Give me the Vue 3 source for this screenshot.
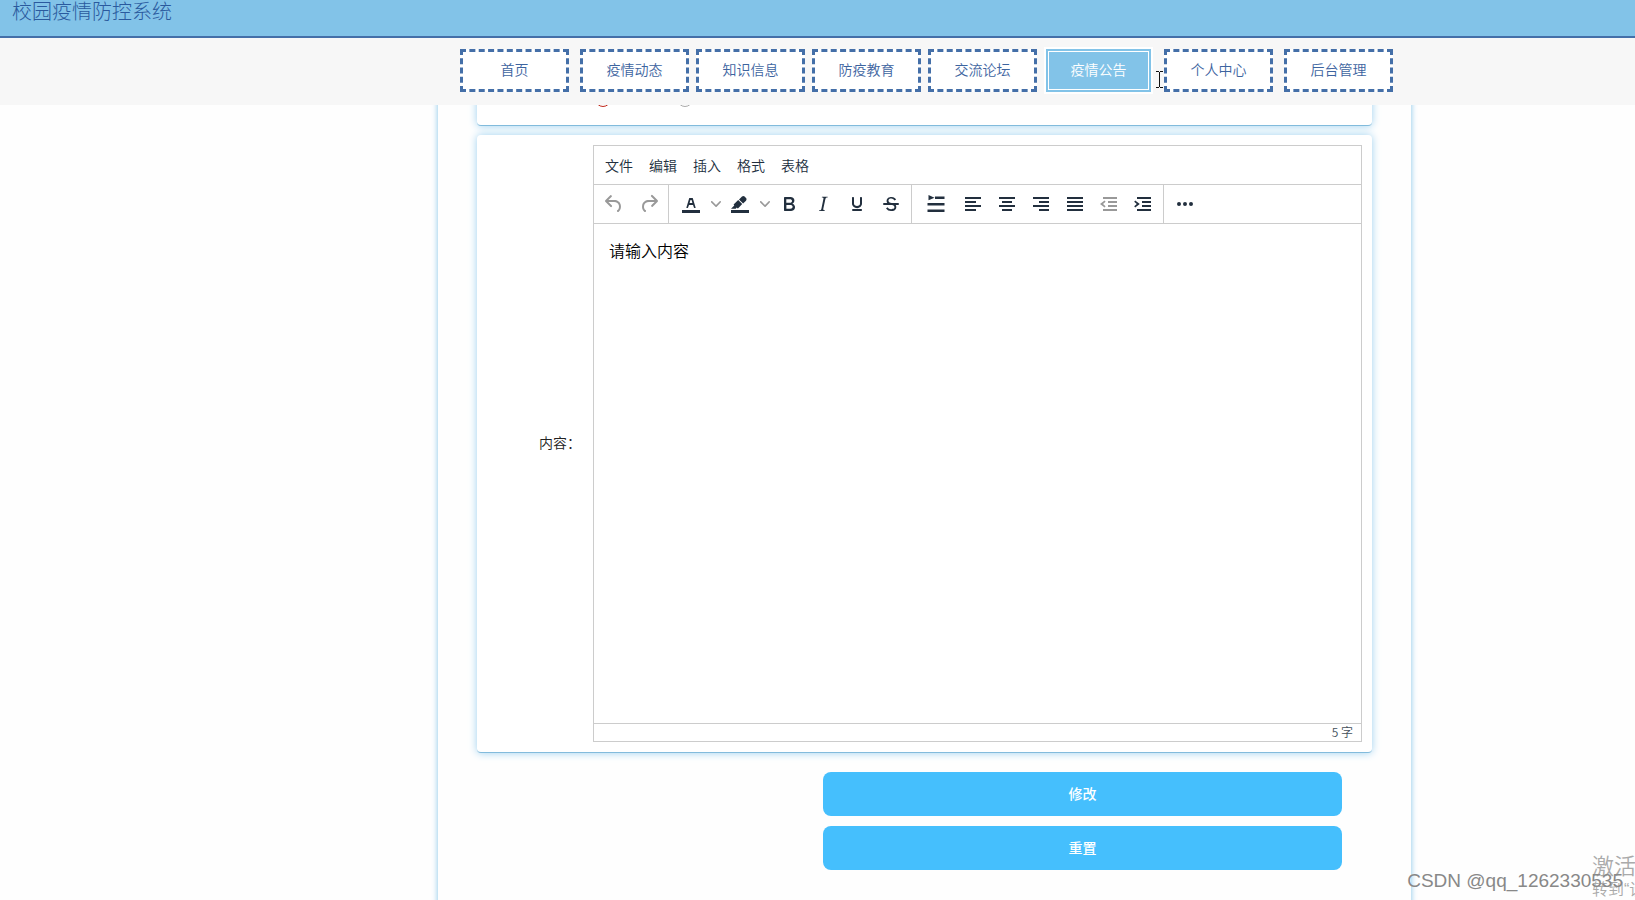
<script setup>
import { ref } from 'vue'

const navGroups = [
  ['首页'],
  ['疫情动态', '知识信息', '防疫教育', '交流论坛', '疫情公告'],
  ['个人中心'],
  ['后台管理']
]
const current = '疫情公告'
const menus = ['文件', '编辑', '插入', '格式', '表格']
const state = ref('a')
const content = ref('请输入内容')

const toolGroups = [
  {
    name: 'history',
    tools: [
      { label: '撤销', muted: true, paths: ['M6.4 8H12c3.7 0 6.2 2 6.8 5.1.6 2.7-.4 5.6-2.3 6.8a1 1 0 01-1-1.8c1.1-.6 1.8-2.7 1.4-4.6-.5-2.1-2.1-3.5-4.9-3.5H6.4l3.3 3.3a1 1 0 11-1.4 1.4l-5-5a1 1 0 010-1.4l5-5a1 1 0 011.4 1.4L6.4 8z'] },
      { label: '重做', muted: true, paths: ['M17.6 10H12c-2.8 0-4.4 1.4-4.9 3.5-.4 2 .3 4 1.4 4.6a1 1 0 11-1 1.8c-2-1.2-2.9-4.1-2.3-6.8.6-3 3-5.1 6.8-5.1h5.6l-3.3-3.3a1 1 0 111.4-1.4l5 5a1 1 0 010 1.4l-5 5a1 1 0 01-1.4-1.4l3.3-3.3z'] }
    ]
  },
  {
    name: 'format',
    tools: [
      { label: '文字颜色', split: true, paths: ['M3 18h18v3H3z', 'M8.7 16h-.8a.5.5 0 01-.5-.6l2.7-9c.1-.3.3-.4.5-.4h2.8c.2 0 .4.1.5.4l2.7 9a.5.5 0 01-.5.6h-.8a.5.5 0 01-.4-.4l-.7-2.2c0-.3-.3-.4-.5-.4h-3.4c-.2 0-.4.1-.5.4l-.7 2.2c0 .3-.2.4-.4.4zm2.6-7.6l-.6 2a.5.5 0 00.5.6h1.6a.5.5 0 00.5-.6l-.6-2c0-.3-.3-.4-.5-.4h-.4c-.2 0-.4.1-.5.4z'] },
      { label: '背景颜色', split: true, paths: ['M3 18h18v3H3z', 'M7.7 16.7H3l3.3-3.3-.7-.8L10.2 8l4 4.1-4 4.2c-.2.2-.6.2-.8 0l-.6-.7-1.1 1.1zm5-7.5L11 7.4l3-2.9a2 2 0 012.6 0L18 6c.7.7.7 2 0 2.7l-2.9 2.9-1.8-1.8-.5-.6'] },
      { label: '粗体', paths: ['M7.8 19c-.3 0-.5 0-.6-.2l-.2-.5V5.7c0-.2 0-.4.2-.5l.6-.2h5c1.5 0 2.7.3 3.5 1 .7.6 1.1 1.4 1.1 2.5a3 3 0 01-.6 1.9c-.4.6-1 1-1.6 1.2.4.1.9.3 1.3.6s.8.7 1 1.2c.4.4.5 1 .5 1.6 0 1.3-.4 2.3-1.3 3-.8.7-2.1 1-3.8 1H7.8zm5-8.3c.6 0 1.2-.1 1.6-.5.4-.3.6-.7.6-1.3 0-1.1-.8-1.7-2.3-1.7H9.3v3.5h3.4zm.5 6c.7 0 1.3-.1 1.7-.4.4-.4.6-.9.6-1.5s-.2-1-.7-1.4c-.4-.3-1-.4-2-.4H9.4v3.8h4z'] },
      { label: '斜体', paths: ['M16.7 4.7l-.1.9h-.3c-.6 0-1 0-1.4.3-.3.3-.4.6-.5 1.1l-2.1 9.8v.6c0 .5.4.8 1.4.8h.2l-.2.8H8l.2-.8h.2c1.1 0 1.8-.5 2-1.5l2-9.8.1-.5c0-.6-.4-.8-1.4-.8h-.3l.2-.9h5.8z'] },
      { label: '下划线', paths: ['M16 5c.6 0 1 .4 1 1v5.5a4 4 0 01-.4 1.8l-1 1.4a5.3 5.3 0 01-5.5 1 5 5 0 01-1.6-1c-.5-.4-.8-.9-1.1-1.4a4 4 0 01-.4-1.8V6c0-.6.4-1 1-1s1 .4 1 1v5.5c0 .3 0 .6.2 1l.6.7a3.3 3.3 0 002.2.8 3.4 3.4 0 002.2-.8c.3-.2.4-.5.6-.8l.2-.9V6c0-.6.4-1 1-1zM8 17h8c.6 0 1 .4 1 1s-.4 1-1 1H8a1 1 0 010-2z'] },
      { label: '删除线', paths: ['M15.6 8.5c-.5-.7-1-1.1-1.3-1.3-.6-.4-1.3-.6-2-.6-2.7 0-2.8 1.7-2.8 2.1 0 1.6 1.8 2 3.2 2.3 4.4.9 4.6 2.8 4.6 3.9 0 1.4-.7 4.1-5 4.1A6.2 6.2 0 017 16.4l1.5-1.1c.4.6 1.6 2 3.7 2 1.6 0 2.5-.4 3-1.2.4-.8.3-2-.8-2.6-.7-.4-1.6-.7-2.9-1-1-.2-3.9-.8-3.9-3.6C7.6 6 10.3 5 12.4 5c2.9 0 4.2 1.6 4.7 2.4l-1.5 1.1z', 'M5 11h14a1 1 0 010 2H5a1 1 0 010-2z'] }
    ]
  },
  {
    name: 'paragraph',
    tools: [
      { label: '行高', wide: true, paths: ['M11 4.500h9.500v2.500H11zM3.500 11h17v2.500h-17zM3.500 17.500h17v2.500h-17z', 'M4.500 3l6 2.700-6 2.600z'] },
      { label: '左对齐', paths: ['M4 5h16v2H4zM4 9h11v2H4zM4 13h16v2H4zM4 17h11v2H4z'] },
      { label: '居中', paths: ['M4 5h16v2H4zM7 9h10v2H7zM4 13h16v2H4zM7 17h10v2H7z'] },
      { label: '右对齐', paths: ['M4 5h16v2H4zM10 9h10v2H10zM4 13h16v2H4zM10 17h10v2H10z'] },
      { label: '两端对齐', paths: ['M4 5h16v2H4zM4 9h16v2H4zM4 13h16v2H4zM4 17h16v2H4z'] },
      { label: '减少缩进', muted: true, paths: ['M6 5h14v2H6zM11 9h9v2h-9zM11 13h9v2h-9zM6 17h14v2H6z', 'M7.600 8.500l1 1.300L6 12l2.600 2.200-1 1.300L3 12z'] },
      { label: '增加缩进', paths: ['M6 5h14v2H6zM11 9h9v2h-9zM11 13h9v2h-9zM6 17h14v2H6z', 'M4.200 8.500l-1 1.300L5.800 12l-2.600 2.200 1 1.300L8.800 12z'] }
    ]
  },
  {
    name: 'more',
    tools: [
      { label: '更多', paths: ['M6 10a2 2 0 100 4 2 2 0 000-4zm6 0a2 2 0 100 4 2 2 0 000-4zm6 0a2 2 0 100 4 2 2 0 000-4z'] }
    ]
  }
]
</script>

<template>
  <div class="page">
    <header class="top">
      <div class="brand">校园疫情防控系统</div>
      <nav class="columns nav-row">
        <ul class="nav">
          <li v-for="(group, g) in navGroups" :key="g" class="nav-group">
            <a v-for="item in group" :key="item" href="#" class="nav-link" :class="{ active: item === current }">
              <span>{{ item }}</span>
            </a>
          </li>
        </ul>
      </nav>
    </header>

    <main class="columns">
      <form class="sheet" @submit.prevent>
        <div class="card options">
          <input v-model="state" type="radio" name="state" value="a" aria-label="是" />
          <input v-model="state" type="radio" name="state" value="b" aria-label="否" />
        </div>

        <div class="card field">
          <label for="content">内容：</label>
          <div class="editor">
            <div class="menubar">
              <button v-for="m in menus" :key="m" type="button">{{ m }}</button>
            </div>
            <div class="toolbar">
              <div v-for="group in toolGroups" :key="group.name" class="tools" :class="group.name">
                <template v-for="t in group.tools" :key="t.label">
                  <button type="button" class="tool" :class="{ muted: t.muted, wide: t.wide }" :aria-label="t.label">
                    <svg width="24" height="24" viewBox="0 0 24 24"><path v-for="d in t.paths" :key="d" :d="d" fill-rule="evenodd" /></svg>
                  </button>
                  <button v-if="t.split" type="button" class="arrow" :aria-label="t.label + '选项'">
                    <svg width="10" height="10" viewBox="0 0 10 10"><path d="M8.700 2.200c.3-.3.8-.3 1 0 .4.4.4.9 0 1.200L5.700 7.800c-.3.3-.9.3-1.200 0L.2 3.400a.8.8 0 010-1.200c.3-.3.8-.3 1.100 0L5 6l3.700-3.800z" /></svg>
                  </button>
                </template>
              </div>
            </div>
            <textarea id="content" v-model="content"></textarea>
            <div class="status">{{ content.length }} 字</div>
          </div>
        </div>

        <div class="actions">
          <button type="submit">修改</button>
          <button type="reset">重置</button>
        </div>
      </form>
    </main>

    <svg class="caret" width="7" height="17" viewBox="0 0 7 17">
      <path d="M0 .5h3M4 .5h3M3.500 1v15M0 16.500h3M4 16.500h3" fill="none" stroke="#111" />
    </svg>
    <div class="activate">
      <div class="activate-title">激活</div>
      <div class="activate-note">转到“设</div>
    </div>
    <div class="credit">CSDN @qq_1262330535</div>
  </div>
</template>

<style>
body {
  margin: 0;
  background: #fefefe;
}
</style>

<style scoped>
.page {
  position: relative;
  height: 100vh;
  overflow: hidden;
  font-family: "Noto Sans CJK SC", sans-serif;
  font-size: 14px;
  font-weight: 350;
  color: #222;
}
.page *,
.page {
  box-sizing: border-box;
}
button,
textarea {
  font: inherit;
  border: 0;
  margin: 0;
  padding: 0;
  background: none;
  color: inherit;
}
.columns {
  display: grid;
  grid-template-columns: 438fr 973fr 224fr;
}
.top {
  position: relative;
  z-index: 2;
  background: #f7f7f7;
}
.brand {
  height: 38px;
  padding-left: 12px;
  background: #82c3e8;
  border-bottom: 2px solid #446fa8;
  color: #2a5a9e;
  font-size: 20px;
  font-weight: 300;
  line-height: 22px;
}
.nav-row {
  height: 67px;
  padding-top: 9px;
}
.nav {
  grid-column: 2;
  display: flex;
  gap: 11px;
  margin: 0;
  padding: 0 0 0 22px;
  list-style: none;
}
.nav-group {
  display: flex;
  align-items: center;
  gap: 7px;
  height: 47px;
}
.nav-link {
  display: flex;
  width: 109px;
  height: 43px;
  border: 3px dashed #446fa8;
  background: #fff;
  color: #3d649f;
  text-decoration: none;
  line-height: 35px;
}
.nav-link span {
  flex: 1;
  text-align: center;
}
.nav-link.active {
  height: 47px;
  padding: 2px;
  border: 2px solid #fff;
  background: #82c3e8;
  color: #fff;
}
.nav-link.active span {
  border: 1px solid #fff;
}
.sheet {
  grid-column: 2;
  min-height: 100vh;
  margin-top: -40px;
  padding: 10px 39px;
  background: #fefefe;
  box-shadow: 0 0 6px #82c3e8;
}
.card {
  background: #fff;
  border-bottom: 1px solid #82bbdc;
  border-radius: 4px;
  box-shadow: 0 0 8px #9dd1f0;
}
.options {
  display: flex;
  gap: 66px;
  padding: 16px 0 18px 118px;
}
.options input {
  appearance: none;
  width: 16px;
  height: 16px;
  margin: 0;
  border: 1px solid #aaa;
  border-radius: 50%;
}
.options input:checked {
  border-color: #c0281c;
}
.field {
  display: grid;
  grid-template-columns: 104px 1fr;
  gap: 12px;
  align-items: center;
  margin-top: 9px;
  padding: 10px;
  padding-left: 0;
}
.field label {
  padding-bottom: 3px;
  text-align: right;
}
.editor {
  border: 1px solid #ccc;
  background: #fff;
  color: #222f3e;
}
.menubar {
  display: flex;
  gap: 16px;
  height: 39px;
  padding-left: 11px;
  border-bottom: 1px solid #ccc;
}
.toolbar {
  display: flex;
  height: 39px;
  border-bottom: 1px solid #ccc;
}
.tools {
  display: flex;
  align-items: center;
  padding: 0 3px 0 4px;
  border-right: 1px solid #ccc;
}
.tools.history {
  padding: 0 2px;
}
.tools.history .tool {
  width: 35px;
}
.tools.more {
  border-right: 0;
}
.tool {
  display: flex;
  align-items: center;
  justify-content: center;
  width: 34px;
  height: 34px;
  fill: #222f3e;
}
.tool.wide {
  width: 40px;
}
.tool.muted {
  fill: #999;
}
.arrow {
  display: flex;
  align-items: center;
  justify-content: center;
  width: 15px;
  height: 34px;
  fill: #999;
}
.tools.format {
  padding-left: 5px;
}
.editor textarea {
  display: block;
  width: 100%;
  height: 499px;
  padding: 15px;
  color: #000;
  font-size: 16px;
  line-height: 22px;
  resize: none;
  outline: 0;
}
.status {
  height: 18px;
  padding-right: 8px;
  border-top: 1px solid #ccc;
  color: #444f5b;
  font-size: 12px;
  line-height: 16px;
  text-align: right;
}
.actions {
  display: grid;
  gap: 10px;
  margin: 19px 30px 0 346px;
}
.actions button {
  height: 44px;
  padding-bottom: 3px;
  border-radius: 8px;
  background: #45bffd;
  color: #fff;
  font-weight: 500;
}
.caret {
  position: absolute;
  z-index: 3;
  left: 1156px;
  top: 71px;
}
.activate {
  position: absolute;
  z-index: 3;
  right: -12px;
  bottom: 0;
  width: 55px;
  color: #aaa;
  white-space: nowrap;
}
.activate-title {
  font-size: 22px;
  line-height: 32px;
}
.activate-note {
  font-family: "Liberation Sans", "Noto Sans CJK SC", sans-serif;
  font-size: 16px;
  line-height: 20px;
}
.credit {
  position: absolute;
  z-index: 4;
  right: 12px;
  bottom: 7px;
  color: #888;
  font-family: "Liberation Sans", Arial, sans-serif;
  font-size: 19px;
  font-weight: 400;
  line-height: 24px;
}
</style>
